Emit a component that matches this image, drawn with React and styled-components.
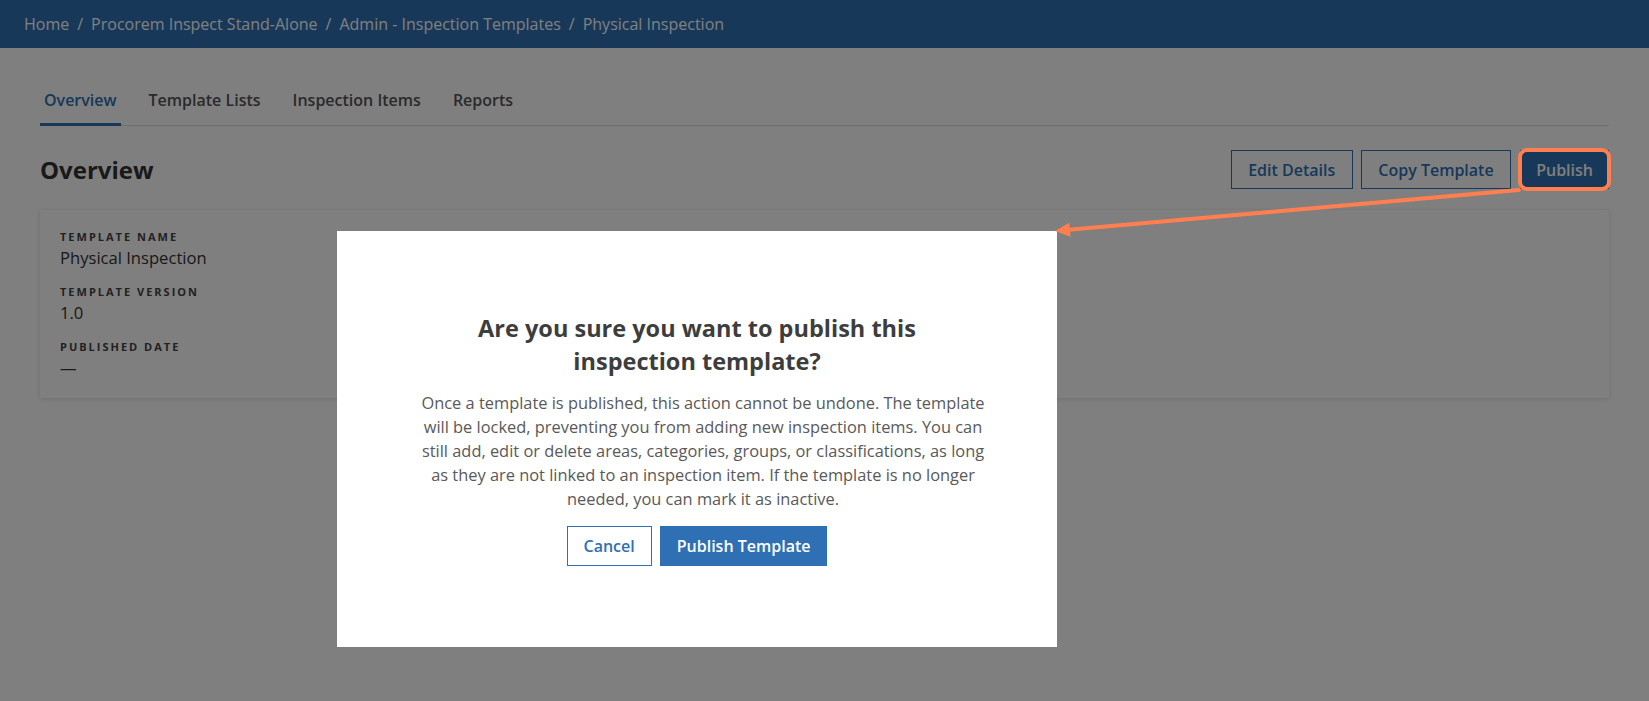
import React from "react";
import styled, { createGlobalStyle } from "styled-components";

const GlobalStyle = createGlobalStyle`
  html, body {
    margin: 0;
    padding: 0;
    background: #ffffff;
    font-family: "Open Sans", "Noto Sans", sans-serif;
    color: #333;
  }
  * { box-sizing: border-box; }
`;

const BRAND = "#2e70b3";
const ACCENT = "#ff7f50";

const Page = styled.div`
  min-height: 100vh;
  background: #ffffff;
`;

const Header = styled.header`
  height: 48px;
  background: ${BRAND};
  display: flex;
  align-items: center;
  padding: 0 24px;
`;

const Crumbs = styled.nav`
  display: flex;
  align-items: center;
  font-size: 16px;
  line-height: 24px;
  color: #ffffff;
`;

const Crumb = styled.span`
  white-space: nowrap;
`;

const Sep = styled.span`
  padding: 0 8px;
`;

const Main = styled.main`
  padding: 28px 40px 0;
`;

const Tabs = styled.div`
  display: flex;
  gap: 24px;
  border-bottom: 1px solid #dddddd;
`;

const Tab = styled.div`
  padding: 12px 4px 11px;
  font-size: 16px;
  line-height: 24px;
  font-weight: 600;
  color: ${(p) => (p.$active ? BRAND : "#555555")};
  border-bottom: 3px solid ${(p) => (p.$active ? BRAND : "transparent")};
  margin-bottom: -1px;
`;

const SectionHead = styled.div`
  display: flex;
  align-items: center;
  justify-content: space-between;
  margin-top: 24px;
`;

const Title = styled.h2`
  margin: 0;
  font-size: 24px;
  line-height: 32px;
  font-weight: 700;
  color: #333333;
`;

const Actions = styled.div`
  display: flex;
  gap: 8px;
`;

const ActionButton = styled.button`
  position: relative;
  height: 39px;
  padding: 0 ${(p) => (p.$primary ? "15px" : "16.5px")};
  font-family: inherit;
  font-size: 16px;
  font-weight: 600;
  border: 1px solid ${BRAND};
  background: ${(p) => (p.$primary ? BRAND : "transparent")};
  color: ${(p) => (p.$primary ? "#ffffff" : BRAND)};
  cursor: pointer;

  ${(p) =>
    p.$highlight &&
    `
    margin-left: 1px;
    &::after {
      content: "";
      position: absolute;
      inset: -3px;
      border: 4px solid ${ACCENT};
      border-radius: 9px;
      z-index: 30;
      pointer-events: none;
    }
  `}
`;

const Card = styled.section`
  margin-top: 21px;
  background: #ffffff;
  box-shadow: 0 1px 5px rgba(0, 0, 0, 0.14);
  padding: 19px 20px 18px;
  display: flex;
  flex-direction: column;
  gap: 14px;
`;

const Field = styled.div`
  display: flex;
  flex-direction: column;
`;

const Label = styled.div`
  font-size: 11px;
  line-height: 16px;
  font-weight: 700;
  letter-spacing: 2px;
  text-transform: uppercase;
  color: #444444;
`;

const Value = styled.div`
  font-size: 16.6px;
  line-height: 25px;
  color: #333333;
`;

const Backdrop = styled.div`
  position: fixed;
  inset: 0;
  z-index: 10;
  background: rgba(0, 0, 0, 0.5);
  display: flex;
  align-items: flex-start;
  padding: 231px 0 0 337px;
`;

const Dialog = styled.div`
  width: 720px;
  height: 416px;
  background: #ffffff;
  display: flex;
  flex-direction: column;
  align-items: center;
  justify-content: center;
  text-align: center;
`;

const DialogTitle = styled.h3`
  margin: 0;
  max-width: 480px;
  font-size: 23.5px;
  line-height: 32.5px;
  font-weight: 700;
  color: #3d3d3d;
`;

const DialogText = styled.p`
  margin: 14px 0 0;
  padding-left: 12px;
  max-width: 594px;
  font-size: 16.4px;
  line-height: 24px;
  color: #595959;
`;

const DialogActions = styled.div`
  display: flex;
  gap: 8px;
  margin-top: 15px;
`;

const DialogButton = styled.button`
  height: 40px;
  padding: 0 16px;
  font-family: inherit;
  font-size: 16px;
  font-weight: 600;
  border: 1px solid ${BRAND};
  background: ${(p) => (p.$primary ? BRAND : "#ffffff")};
  color: ${(p) => (p.$primary ? "#ffffff" : BRAND)};
  cursor: pointer;
`;

const Pointer = styled.svg`
  position: fixed;
  inset: 0;
  width: 100%;
  height: 100%;
  z-index: 30;
  pointer-events: none;
`;

const crumbs = [
  "Home",
  "Procorem Inspect Stand-Alone",
  "Admin - Inspection Templates",
  "Physical Inspection",
];

const tabs = ["Overview", "Template Lists", "Inspection Items", "Reports"];

const fields = [
  ["Template Name", "Physical Inspection"],
  ["Template Version", "1.0"],
  ["Published Date", "—"],
];

export default function App() {
  return (
    <>
      <GlobalStyle />
      <Page>
        <Header>
          <Crumbs>
            {crumbs.map((c, i) => (
              <React.Fragment key={c}>
                {i > 0 && <Sep>/</Sep>}
                <Crumb>{c}</Crumb>
              </React.Fragment>
            ))}
          </Crumbs>
        </Header>
        <Main>
          <Tabs>
            {tabs.map((t, i) => (
              <Tab key={t} $active={i === 0}>
                {t}
              </Tab>
            ))}
          </Tabs>
          <SectionHead>
            <Title>Overview</Title>
            <Actions>
              <ActionButton>Edit Details</ActionButton>
              <ActionButton>Copy Template</ActionButton>
              <ActionButton $primary $highlight>
                Publish
              </ActionButton>
            </Actions>
          </SectionHead>
          <Card>
            {fields.map(([label, value]) => (
              <Field key={label}>
                <Label>{label}</Label>
                <Value>{value}</Value>
              </Field>
            ))}
          </Card>
        </Main>
      </Page>

      <Backdrop>
        <Dialog role="dialog" aria-modal="true">
          <DialogTitle>
            Are you sure you want to publish this inspection template?
          </DialogTitle>
          <DialogText>
            Once a template is published, this action cannot be undone. The
            template will be locked, preventing you from adding new inspection
            items. You can still add, edit or delete areas, categories, groups,
            or classifications, as long as they are not linked to an inspection
            item. If the template is no longer needed, you can mark it as
            inactive.
          </DialogText>
          <DialogActions>
            <DialogButton>Cancel</DialogButton>
            <DialogButton $primary>Publish Template</DialogButton>
          </DialogActions>
        </Dialog>
      </Backdrop>

      <Pointer viewBox="0 0 1649 701" preserveAspectRatio="xMinYMin meet">
        <line
          x1="1519"
          y1="190"
          x2="1066"
          y2="230"
          stroke={ACCENT}
          strokeWidth="4"
          strokeLinecap="round"
        />
        <polygon
          points="1055,231 1070.6,236.7 1069.3,222.7"
          fill={ACCENT}
        />
      </Pointer>
    </>
  );
}
